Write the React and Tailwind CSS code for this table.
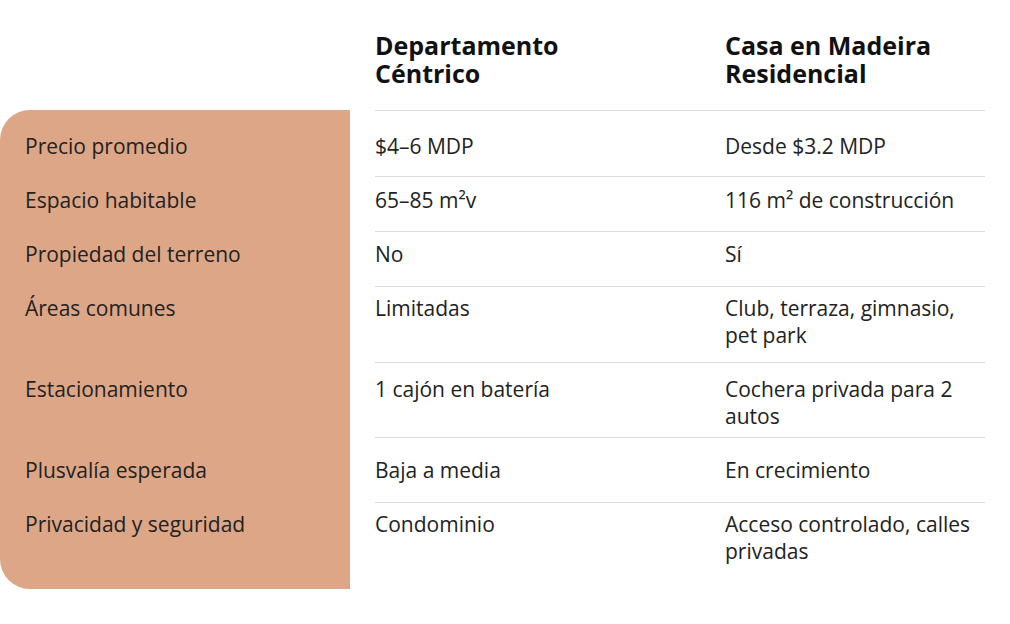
import React from 'react';

const rows = [
  {
    label: 'Precio promedio',
    a: '$4–6 MDP',
    b: ['Desde $3.2 MDP'],
    row: 'h-[66px]',
    left: 'pt-[23px] rounded-tl-[30px]',
    right: 'pt-[22px]',
  },
  {
    label: 'Espacio habitable',
    a: '65–85 m²v',
    b: ['116 m² de construcción'],
    row: 'h-[55px]',
    left: 'pt-[11px]',
    right: 'pt-[10px]',
  },
  {
    label: 'Propiedad del terreno',
    a: 'No',
    b: ['Sí'],
    row: 'h-[55px]',
    left: 'pt-[10px]',
    right: 'pt-[9px]',
  },
  {
    label: 'Áreas comunes',
    a: 'Limitadas',
    b: ['Club, terraza, gimnasio,', 'pet park'],
    row: 'h-[76px]',
    left: 'pt-[9px]',
    right: 'pt-[8px]',
  },
  {
    label: 'Estacionamiento',
    a: '1 cajón en batería',
    b: ['Cochera privada para 2', 'autos'],
    row: 'h-[75px]',
    left: 'pt-[14px]',
    right: 'pt-[13px]',
  },
  {
    label: 'Plusvalía esperada',
    a: 'Baja a media',
    b: ['En crecimiento'],
    row: 'h-[65px]',
    left: 'pt-[20px]',
    right: 'pt-[19px]',
  },
  {
    label: 'Privacidad y seguridad',
    a: 'Condominio',
    b: ['Acceso controlado, calles', 'privadas'],
    row: 'h-[87px]',
    left: 'pt-[9px] rounded-bl-[30px]',
    right: 'pt-[8px]',
  },
];

const headers = [
  ['Departamento', 'Céntrico'],
  ['Casa en Madeira', 'Residencial'],
];

const ComparisonTable = () => {
  return (
    <div className="w-[1010px] h-[624px] bg-white font-['Open_Sans',sans-serif] text-[#222]">
      {/* Header */}
      <div className="flex h-[110px] pt-[31px]">
        <div className="w-[350px] shrink-0" />
        <div className="ml-[25px] grid w-[610px] grid-cols-[350px_260px] text-[25px] font-bold leading-[28px] text-[#111]">
          {headers.map((h) => (
            <div key={h[0]} className="flex flex-col">
              {h.map((line) => (
                <span key={line} className="block h-[28px] overflow-visible">
                  {line}
                </span>
              ))}
            </div>
          ))}
        </div>
      </div>

      {/* Rows */}
      {rows.map((r) => (
        <div key={r.label} className={`flex text-[21px] leading-[27px] ${r.row}`}>
          <div className={`w-[350px] shrink-0 bg-[#dda687] pl-[25px] ${r.left}`}>{r.label}</div>
          <div className={`ml-[25px] grid w-[610px] grid-cols-[350px_260px] border-t border-[#dcdcdc] ${r.right}`}>
            <div>{r.a}</div>
            <div className="whitespace-nowrap">
              {r.b.map((line, i) => (
                <div key={i}>{line}</div>
              ))}
            </div>
          </div>
        </div>
      ))}
    </div>
  );
};

export default function App() {
  return <ComparisonTable />;
}
